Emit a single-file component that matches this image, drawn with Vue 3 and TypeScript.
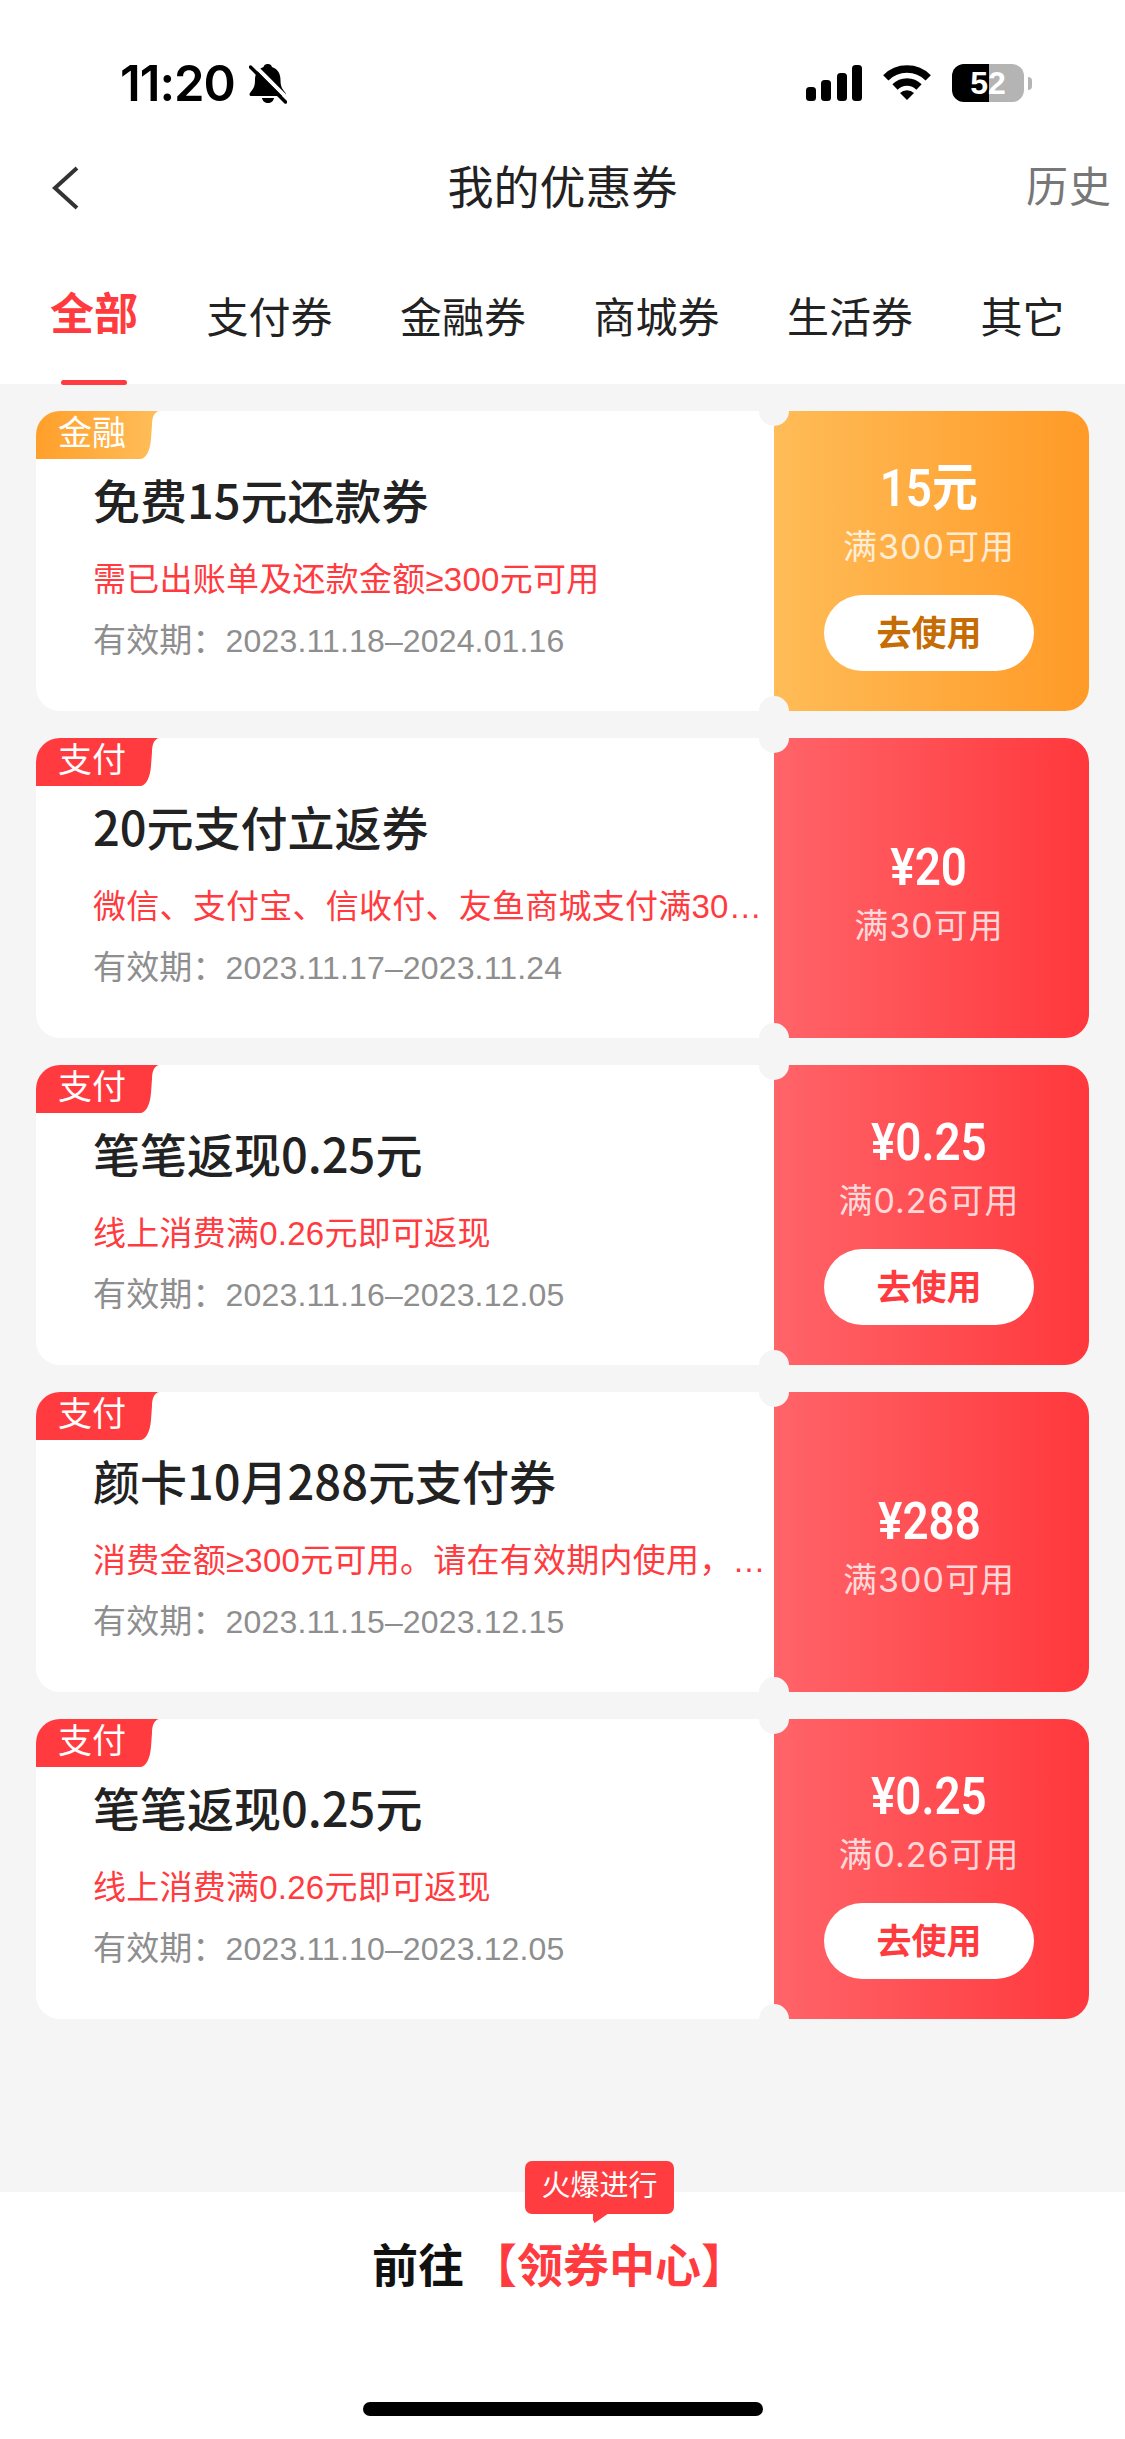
<script setup lang="ts">
interface Coupon {
  kind: 'gold' | 'red'
  tag: string
  title: string
  desc: string
  date: string
  amount: string
  limit: string
  action: boolean
}

const tabs = ['支付券', '金融券', '商城券', '生活券', '其它']

const coupons: Coupon[] = [
  { kind: 'gold', tag: '金融', title: '免费15元还款券', desc: '需已出账单及还款金额≥300元可用', date: '2023.11.18–2024.01.16', amount: '15元', limit: '满300可用', action: true },
  { kind: 'red', tag: '支付', title: '20元支付立返券', desc: '微信、支付宝、信收付、友鱼商城支付满30元可用，每日限领一次', date: '2023.11.17–2023.11.24', amount: '¥20', limit: '满30可用', action: false },
  { kind: 'red', tag: '支付', title: '笔笔返现0.25元', desc: '线上消费满0.26元即可返现', date: '2023.11.16–2023.12.05', amount: '¥0.25', limit: '满0.26可用', action: true },
  { kind: 'red', tag: '支付', title: '颜卡10月288元支付券', desc: '消费金额≥300元可用。请在有效期内使用，过期作废不予补发', date: '2023.11.15–2023.12.15', amount: '¥288', limit: '满300可用', action: false },
  { kind: 'red', tag: '支付', title: '笔笔返现0.25元', desc: '线上消费满0.26元即可返现', date: '2023.11.10–2023.12.05', amount: '¥0.25', limit: '满0.26可用', action: true },
]
</script>

<template>
  <div class="page">
    <header class="status">
      <div class="status-left">
        <span class="time">11:20</span>
        <svg class="bell" width="38" height="40" viewBox="0 0 38 40">
          <path d="M19 0c2 0 3.500 1.200 4 3 6 2 8.500 7 8.500 13 0 7 2 9 5 13 1 1.500.5 3-1.500 3H2.500c-2 0-2.500-1.500-1.500-3 3-4 5-6 5-13 0-6 2.500-11 8.500-13 .5-1.800 2-3 4-3z" />
          <path d="M13 34h12c-.5 3-3 5-6 5s-5.500-2-6-5z" />
          <path class="slash-gap" d="M4 0l36 36" />
          <path class="slash" d="M1.500 3l35 35" />
        </svg>
      </div>
      <div class="status-right">
        <svg width="56" height="36" viewBox="0 0 56 36">
          <rect x="0" y="22" width="10" height="14" rx="3.500" />
          <rect x="15" y="15" width="10" height="21" rx="3.500" />
          <rect x="31" y="8" width="10" height="28" rx="3.500" />
          <rect x="46" y="0" width="10" height="36" rx="3.500" />
        </svg>
        <svg class="wifi" width="48" height="36" viewBox="0 0 48 36">
          <path class="arc" d="M2.800 12.800A30 30 0 0 1 45.200 12.800" />
          <path class="arc" d="M12 22A17 17 0 0 1 36 22" />
          <path d="M24 35L17 28A10 10 0 0 1 31 28Z" />
        </svg>
        <div class="battery">
          <div class="battery-body"><span>52</span></div>
          <i class="battery-nub"></i>
        </div>
      </div>
    </header>

    <nav class="nav">
      <svg class="back" width="28" height="44" viewBox="0 0 28 44">
        <path d="M25 2L3 22l22 20" />
      </svg>
      <h1 class="nav-title">我的优惠券</h1>
      <span class="nav-history">历史</span>
    </nav>

    <div class="tabs">
      <span class="tab active">全部</span>
      <span v-for="tab in tabs" :key="tab" class="tab">{{ tab }}</span>
    </div>

    <main class="list">
      <article v-for="(c, i) in coupons" :key="i" class="card" :class="c.kind">
        <span class="tag">{{ c.tag }}</span>
        <div class="info">
          <h2 class="title">{{ c.title }}</h2>
          <p class="desc">{{ c.desc }}</p>
          <p class="date"><span class="date-label">有效期：</span>{{ c.date }}</p>
        </div>
        <div class="value" :class="{ plain: !c.action }">
          <div class="amount">{{ c.amount }}</div>
          <div class="limit">{{ c.limit }}</div>
          <button v-if="c.action" class="use">去使用</button>
        </div>
        <i class="notch top"></i>
        <i class="notch bottom"></i>
      </article>
    </main>

    <footer class="footer">
      <div class="bubble">火爆进行</div>
      <div class="go">前往<span class="go-link">【领券中心】</span></div>
      <div class="home-bar"></div>
    </footer>
  </div>
</template>

<style scoped>
.page {
  width: 1125px;
  height: 2439px;
  display: flex;
  flex-direction: column;
  background: #fff;
  font-family: "Liberation Sans", "Noto Sans CJK SC", sans-serif;
  overflow: hidden;
}

/* status bar */
.status {
  height: 130px;
  box-sizing: border-box;
  padding: 64px 93px 0 120px;
  display: flex;
  justify-content: space-between;
  align-items: flex-start;
}
.status-left {
  display: flex;
  align-items: center;
  gap: 14px;
}
.time {
  font-family: Inter, sans-serif;
  font-size: 49px;
  font-weight: 600;
  line-height: 38px;
  letter-spacing: -1px;
  color: #000;
}
.bell {
  fill: #000;
}
.slash-gap {
  stroke: #fff;
  stroke-width: 4;
}
.slash {
  stroke: #000;
  stroke-width: 3.500;
  stroke-linecap: round;
}
.status-right {
  display: flex;
  align-items: center;
  gap: 21px;
  height: 38px;
  fill: #000;
}
.wifi .arc {
  fill: none;
  stroke: #000;
  stroke-width: 7.500;
}
.battery {
  display: flex;
  align-items: center;
  gap: 4px;
}
.battery-body {
  width: 72px;
  height: 38px;
  border-radius: 12px;
  background: linear-gradient(90deg, #000 51%, #b4b4b4 51%);
  color: #fff;
  font-family: "Liberation Sans", sans-serif;
  font-size: 32px;
  font-weight: 700;
  line-height: 38px;
  text-align: center;
}
.battery-nub {
  width: 4px;
  height: 13px;
  border-radius: 0 4px 4px 0;
  background: #b4b4b4;
}

/* nav */
.nav {
  height: 116px;
  display: grid;
  grid-template-columns: 1fr auto 1fr;
  align-items: center;
  padding: 0 13px;
}
.back {
  margin-left: 39px;
}
.back path {
  fill: none;
  stroke: #333;
  stroke-width: 4;
}
.nav-title {
  margin: 0;
  font-size: 46px;
  font-weight: 400;
  line-height: 60px;
  color: #222;
}
.nav-history {
  justify-self: end;
  font-size: 42px;
  letter-spacing: 1px;
  line-height: 60px;
  color: #777;
}

/* tabs */
.tabs {
  position: relative;
  height: 138px;
  box-sizing: border-box;
  padding: 48px 0 0 50px;
  display: flex;
  align-items: flex-start;
  gap: 67.500px;
}
.tab {
  font-size: 42px;
  line-height: 50px;
  color: #222;
}
.tab.active {
  position: relative;
  margin-top: -4px;
  margin-right: 1px;
  font-size: 44px;
  font-weight: 700;
  color: #ff3b40;
}
.tab.active::after {
  content: "";
  position: absolute;
  left: 11px;
  width: 66px;
  top: 90px;
  height: 5px;
  border-radius: 3px;
  background: #ff3b40;
}

/* coupon list */
.list {
  flex: 1;
  background: #f5f5f5;
  padding: 27px 36px 0;
  display: flex;
  flex-direction: column;
  gap: 27px;
}
.card {
  position: relative;
  height: 300px;
  display: flex;
  background: #fff;
  border-radius: 24px;
  overflow: hidden;
}
.tag {
  position: absolute;
  left: 0;
  top: 0;
  width: 123px;
  height: 48px;
  box-sizing: border-box;
  padding-left: 22px;
  font-size: 34px;
  line-height: 44px;
  color: #fff;
  clip-path: path("M0 0H123C118 1 116 7 116 14L115 28C114 40 110 48 104 48H0Z");
}
.gold .tag {
  background: linear-gradient(90deg, #ff9f2a, #ffbe5a);
}
.red .tag {
  background: #ff3b40;
}
.info {
  width: 738px;
  box-sizing: border-box;
  padding: 62px 5px 0 57px;
}
.title {
  margin: 0;
  font-family: "Noto Sans CJK SC", sans-serif;
  font-size: 47px;
  font-weight: 500;
  line-height: 52px;
  color: #222;
  white-space: nowrap;
}
.desc {
  margin: 31px 0 0;
  font-size: 33px;
  letter-spacing: 0.25px;
  line-height: 48px;
  color: #ff3b40;
  white-space: nowrap;
  overflow: hidden;
  text-overflow: ellipsis;
}
.date {
  margin: 13px 0 0;
  font-size: 32px;
  letter-spacing: 0.15px;
  line-height: 48px;
  color: #8e8e8e;
  white-space: nowrap;
}
.date-label {
  font-size: 33px;
}
.value {
  width: 315px;
  box-sizing: border-box;
  padding: 50px 5px 0 0;
  display: flex;
  flex-direction: column;
  align-items: center;
  color: #fff;
}
.value.plain {
  padding-top: 102px;
}
.gold .value {
  background: linear-gradient(90deg, #ffbc57, #ff9a27);
}
.red .value {
  background: linear-gradient(90deg, #ff6469, #ff383c);
}
.amount {
  font-family: Roboto, "Noto Sans CJK SC", sans-serif;
  font-size: 52px;
  font-weight: 600;
  line-height: 56px;
  transform: scaleX(0.88);
}
.limit {
  font-family: Inter, "Noto Sans CJK SC", sans-serif;
  font-size: 34px;
  letter-spacing: 1px;
  line-height: 60px;
  color: rgba(255, 255, 255, 0.78);
}
.use {
  margin-top: 18px;
  width: 210px;
  height: 76px;
  padding: 0 0 5px;
  border: 0;
  border-radius: 38px;
  background: #fff;
  font-family: "Noto Sans CJK SC", sans-serif;
  font-size: 35px;
  font-weight: 600;
  color: #ff3b40;
}
.gold .use {
  color: #c66c05;
}
.notch {
  position: absolute;
  left: 723px;
  width: 30px;
  height: 30px;
  border-radius: 50%;
  background: #f5f5f5;
}
.notch.top {
  top: -15px;
}
.notch.bottom {
  bottom: -15px;
}

/* footer */
.footer {
  position: relative;
  height: 247px;
  background: #fff;
}
.bubble {
  position: absolute;
  left: 525px;
  top: -31px;
  width: 149px;
  height: 53px;
  border-radius: 7px;
  background: #ff3d41;
  color: #fff;
  font-size: 29px;
  line-height: 50px;
  text-align: center;
}
.bubble::after {
  content: "";
  position: absolute;
  left: 68px;
  top: 52px;
  width: 16px;
  height: 10px;
  background: #ff3d41;
  clip-path: polygon(0 0, 100% 0, 10% 100%, 0 70%);
}
.go {
  padding: 44px 6px 0 0;
  display: flex;
  justify-content: center;
  font-size: 46px;
  font-weight: 600;
  line-height: 60px;
  color: #111;
}
.go-link {
  margin-left: 7px;
  color: #ff3b40;
}
.home-bar {
  position: absolute;
  left: 363px;
  top: 210px;
  width: 400px;
  height: 14px;
  border-radius: 7px;
  background: #000;
}
</style>

<style>
html,
body {
  margin: 0;
  background: #fff;
}
</style>
